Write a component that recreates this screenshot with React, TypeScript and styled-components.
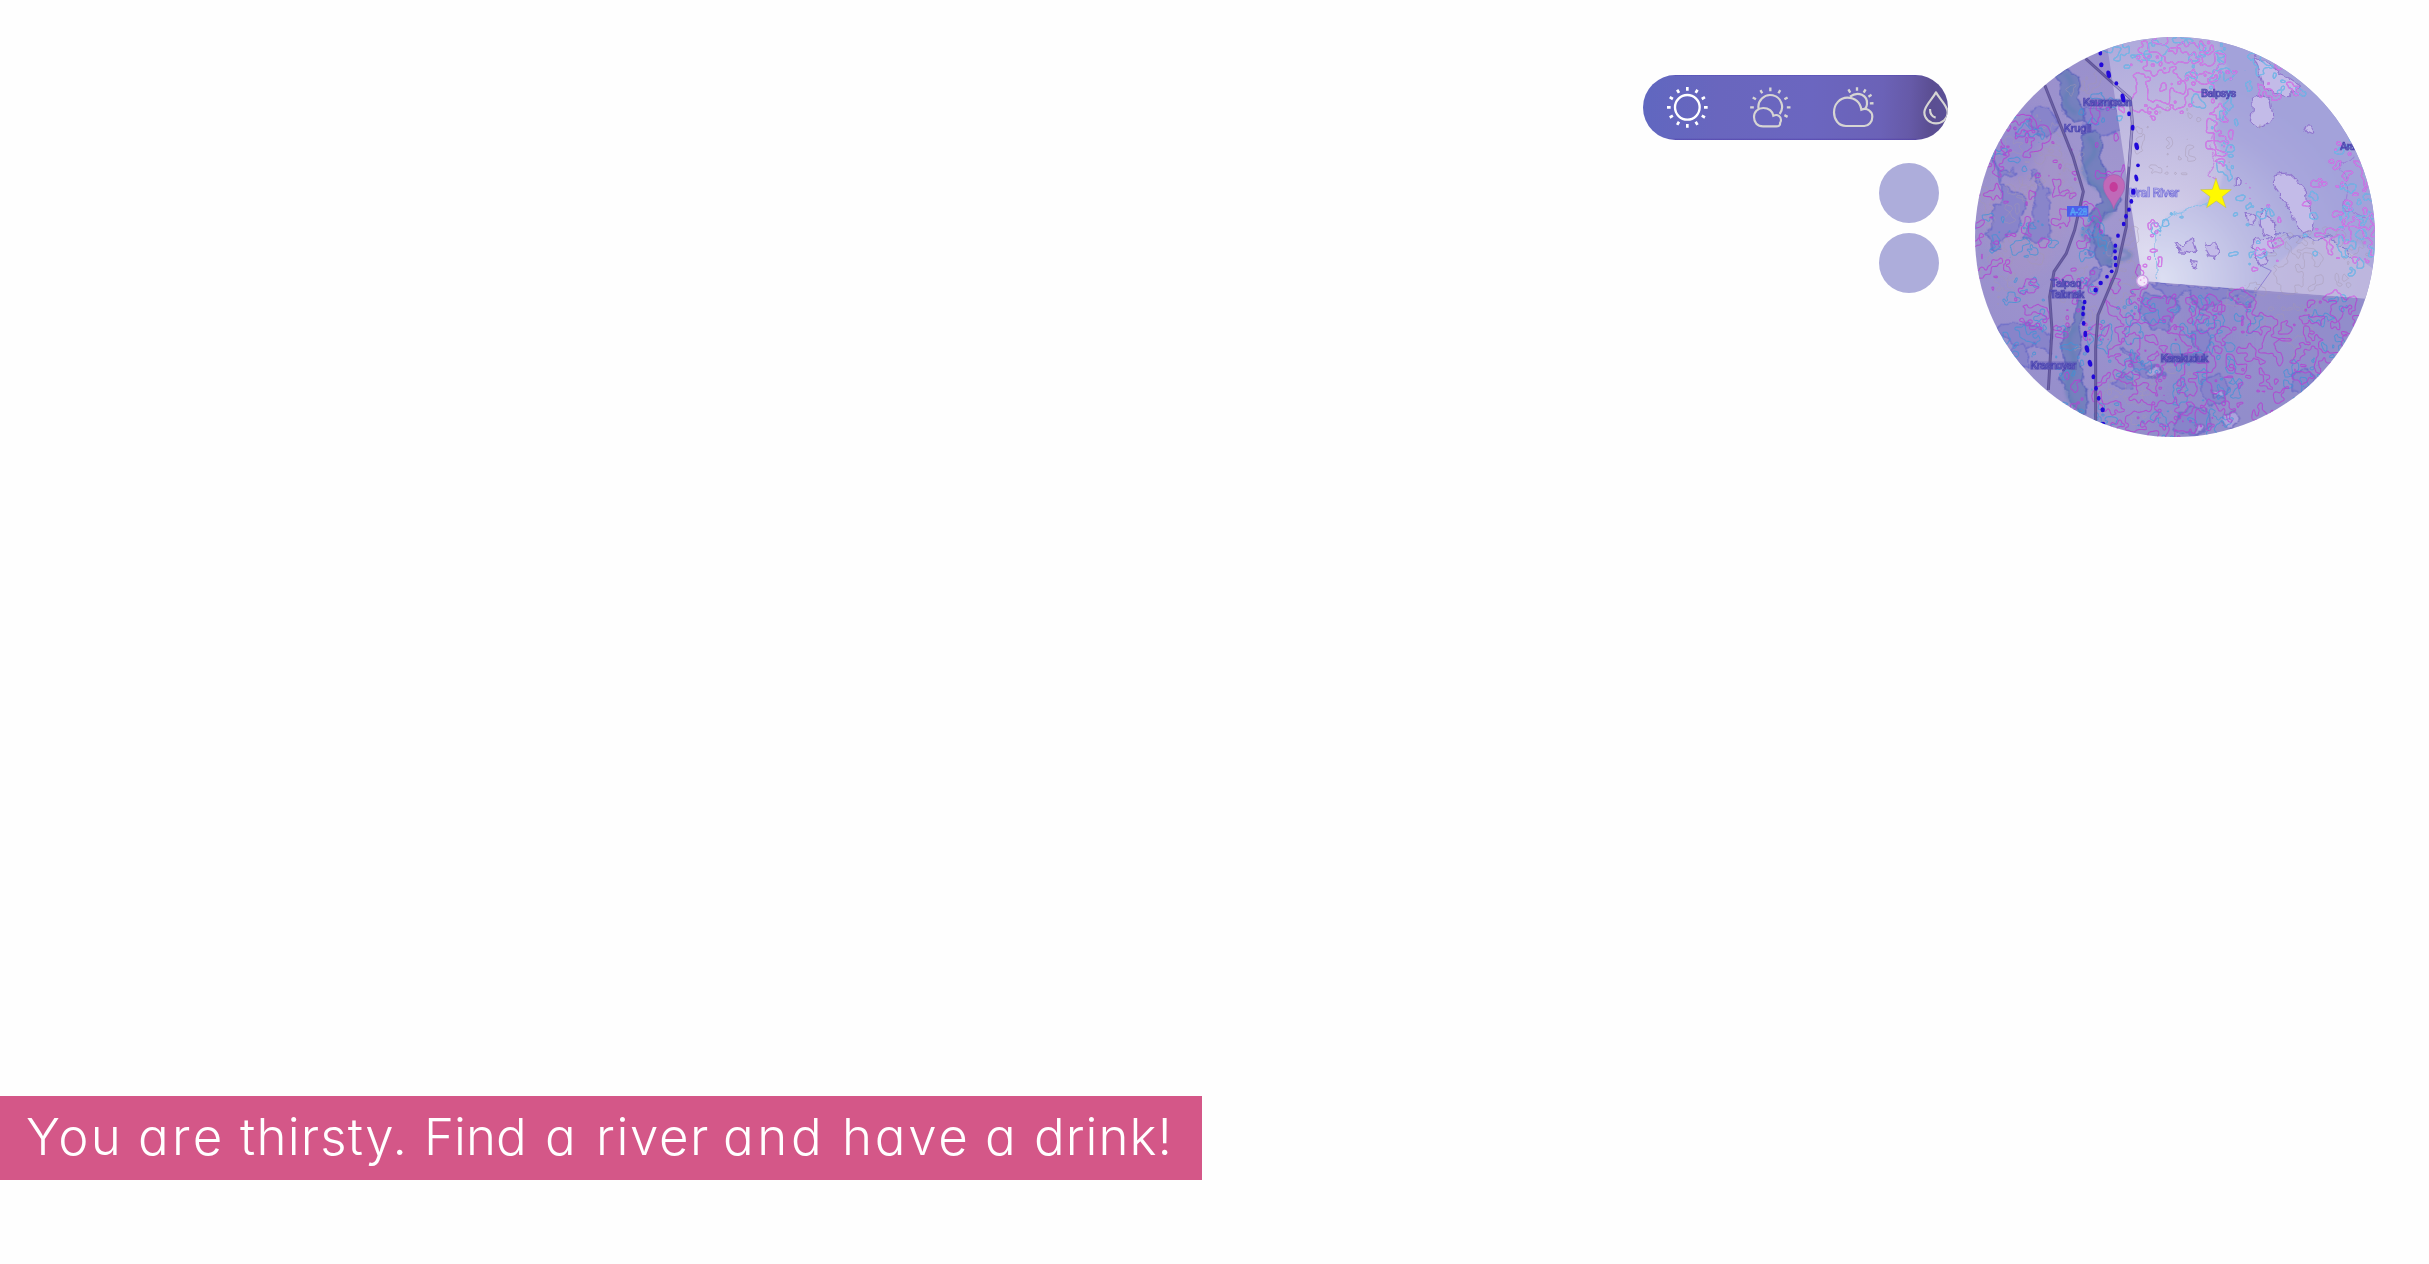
import React, { useMemo } from 'react';
import styled, { createGlobalStyle } from 'styled-components';

const Global = createGlobalStyle`
  * { box-sizing: border-box; }
  html, body { margin: 0; padding: 0; background: #fefefe; overflow: hidden; }
`;

const Screen = styled.main`
  display: flex;
  flex-direction: column;
  justify-content: space-between;
  align-items: flex-start;
  width: 2429px;
  height: 1264px;
  padding: 37px 0 84px;
  background: #fefefe;
  font-family: Inter, 'Liberation Sans', sans-serif;
`;

const Hud = styled.header`
  display: flex;
  align-self: flex-end;
  align-items: flex-start;
  gap: 27px;
  padding-right: 54px;
`;

const Controls = styled.div`
  display: flex;
  flex-direction: column;
  align-items: flex-end;
  padding-top: 38px;
`;

const WeatherBar = styled.div`
  display: flex;
  align-items: flex-start;
  gap: 42px;
  width: 305px;
  height: 65px;
  padding: 12px 0 0 24px;
  overflow: hidden;
  border-radius: 33px;
  background:
    linear-gradient(to bottom, rgba(70, 60, 175, 0.5) 0, transparent 1.5px, transparent 63px, rgba(75, 55, 165, 0.6) 65px),
    linear-gradient(93deg, #6067c0 0%, #6966be 25%, #6b66c0 55%, #6b62b7 78%, #665aa8 87%, #5b4e92 94%, #5b5096 100%);
`;

const WeatherIcon = styled.svg<{ $active?: boolean }>`
  flex: none;
  width: 41px;
  height: 41px;
  overflow: visible;
  fill: none;
  stroke: ${(p) => (p.$active ? '#ffffff' : '#d6d5d3')};
  stroke-width: ${(p) => (p.$active ? 7 : 6.5)};
`;

const Slots = styled.div`
  display: flex;
  flex-direction: column;
  gap: 10px;
  padding: 23px 9px 0 0;
`;

const Slot = styled.div`
  width: 60px;
  height: 60px;
  border-radius: 50%;
  background: #adaddb;
`;

const MiniMap = styled.svg`
  display: block;
  width: 400px;
  height: 400px;
`;

const MapLabel = styled.text`
  font-family: Roboto, 'Liberation Sans', sans-serif;
  font-size: 34px;
  font-weight: 500;
  fill: #6f68bf;
  stroke: #4a44b0;
  stroke-width: 2px;
`;

const Banner = styled.div`
  display: flex;
  width: 1202px;
  height: 84px;
  padding-left: 26px;
  background: #d45788;
  color: #ffffff;
  font-size: 51px;
  font-weight: 300;
  line-height: 82px;
  white-space: pre;
  font-feature-settings: 'cv11' 1, 'calt' 0;
`;

const Word = styled.span<{ $advance: number; $tracking: number }>`
  flex: none;
  width: ${(p) => p.$advance}px;
  letter-spacing: ${(p) => p.$tracking}px;
`;

const message: [string, number, number][] = [
  ['You ', 112, 2.2],
  ['are ', 102, 3.3],
  ['thirsty. ', 184, 1.2],
  ['Find ', 121, 0],
  ['a ', 51, 0],
  ['river ', 127, 1.6],
  ['and ', 119, 3.6],
  ['have ', 143, 2.7],
  ['a ', 49, 0],
  ['drink!', 140, 1],
];

type Point = [number, number];
const rays = (cx: number, cy: number, pts: Point[]) =>
  pts
    .map(([x, y]) => {
      const d = Math.hypot(x - cx, y - cy);
      const ux = ((x - cx) / d) * 5.5;
      const uy = ((y - cy) / d) * 5.5;
      return `M${x - ux} ${y - uy}L${x + ux} ${y + uy}`;
    })
    .join('');

const sunRays = Array.from({ length: 12 }, (_, i): Point => {
  const a = (i * Math.PI) / 6;
  return [172 + Math.cos(a) * 55.5, 142 + Math.sin(a) * 55.5];
});

/* Deterministic value noise, used for the shoreline and vegetation contours. */
const hash = (x: number, y: number, s: number) => {
  let h = (x * 374761393 + y * 668265263 + s * 1442695041) | 0;
  h = Math.imul(h ^ (h >>> 13), 1274126177);
  h ^= h >>> 16;
  return (h >>> 0) / 4294967295;
};
const noise = (x: number, y: number, s: number) => {
  const ix = Math.floor(x);
  const iy = Math.floor(y);
  const fx = x - ix;
  const fy = y - iy;
  const u = fx * fx * (3 - 2 * fx);
  const v = fy * fy * (3 - 2 * fy);
  const a = hash(ix, iy, s);
  const b = hash(ix + 1, iy, s);
  const c = hash(ix, iy + 1, s);
  const d = hash(ix + 1, iy + 1, s);
  return a + (b - a) * u + (c - a) * v + (a - b - c + d) * u * v;
};

type Zone = [number, number, number, number, number?];
const contour = (zones: Zone[], seed: number, size: number, level: number) => {
  const step = 3;
  const n = 401;
  const f = new Float32Array(n * n);
  for (let j = 0; j < n; j++)
    for (let i = 0; i < n; i++) {
      const x = 46 + i * step;
      const y = 52 + j * step;
      let m = 0;
      for (const [cx, cy, rx, ry, w = 1] of zones) {
        const q = ((x - cx) / rx) ** 2 + ((y - cy) / ry) ** 2;
        if (q < 1.9) m = Math.max(m, (0.25 + w * 0.75) * Math.min(1, (1.9 - q) * 1.4));
      }
      const v = noise(x / size, y / size, seed) * 0.6 + noise((x / size) * 2.6, (y / size) * 2.6, seed + 9) * 0.4;
      f[j * n + i] = v - level - (1 - m) * 0.4;
    }
  let d = '';
  const r = (v: number) => Math.round(v * 10) / 10;
  for (let j = 0; j < n - 1; j++)
    for (let i = 0; i < n - 1; i++) {
      const a = f[j * n + i];
      const b = f[j * n + i + 1];
      const c = f[(j + 1) * n + i + 1];
      const e = f[(j + 1) * n + i];
      const x = 46 + i * step;
      const y = 52 + j * step;
      const p: Point[] = [];
      if (a > 0 !== b > 0) p.push([x + (step * a) / (a - b), y]);
      if (b > 0 !== c > 0) p.push([x + step, y + (step * b) / (b - c)]);
      if (e > 0 !== c > 0) p.push([x + (step * e) / (e - c), y + step]);
      if (a > 0 !== e > 0) p.push([x, y + (step * a) / (a - e)]);
      for (let k = 0; k + 1 < p.length; k += 2)
        d += `M${r(p[k][0])} ${r(p[k][1])}L${r(p[k + 1][0])} ${r(p[k + 1][1])}`;
    }
  return d;
};

const magentaZones: Zone[] = [
  [650, 150, 110, 95], [770, 145, 60, 40], [600, 250, 70, 45, 0.85], [780, 350, 35, 110, 0.75],
  [180, 350, 75, 55], [100, 400, 60, 60, 0.7], [300, 480, 45, 120, 0.6], [430, 290, 60, 40, 0.8], [450, 420, 40, 90, 0.6],
  [570, 700, 35, 90, 0.8], [960, 190, 60, 50, 0.5], [1180, 440, 55, 80, 0.7],
  [1180, 650, 70, 90, 0.8], [900, 640, 60, 90, 0.4], [1080, 570, 50, 80, 0.4],
  [520, 930, 110, 90, 0.95], [680, 900, 100, 80, 0.95], [840, 960, 100, 120], [950, 1000, 90, 80, 0.8],
  [1130, 900, 90, 70, 0.95], [1090, 1020, 80, 100, 0.95], [880, 1120, 110, 70, 0.75], [700, 1100, 110, 130],
  [500, 1130, 80, 90, 0.95], [340, 900, 55, 60, 0.8], [220, 830, 50, 80, 0.7], [100, 690, 60, 90, 0.75],
  [310, 1110, 50, 60, 0.7], [140, 560, 90, 60, 0.55], [380, 620, 40, 60, 0.8], [340, 780, 60, 40, 0.6],
  [650, 1210, 170, 40, 0.9], [1000, 1100, 60, 60, 0.8], [450, 830, 90, 50, 0.6], [240, 560, 60, 100, 0.5],
];
const cyanZones: Zone[] = [
  [630, 90, 170, 30, 0.85], [490, 110, 50, 50, 0.8], [750, 190, 60, 70, 0.7], [795, 360, 35, 120, 0.8],
  [900, 160, 40, 70, 0.8], [1000, 200, 40, 30, 0.8], [170, 370, 80, 70, 0.75], [430, 270, 60, 40, 0.75],
  [620, 600, 50, 50, 0.5], [830, 740, 35, 40, 0.5], [880, 620, 55, 90, 0.55], [1070, 600, 40, 90, 0.5],
  [1190, 620, 50, 150, 0.8], [1170, 380, 40, 50, 0.7], [210, 670, 70, 60, 0.8], [90, 640, 50, 50, 0.8],
  [190, 890, 60, 110, 0.7], [400, 700, 35, 100, 0.7], [340, 1000, 50, 170, 0.5], [530, 960, 90, 110, 0.75],
  [720, 940, 90, 90, 0.8], [740, 1090, 90, 90, 0.9], [850, 880, 50, 60, 0.7], [1110, 870, 60, 50, 0.75],
  [1030, 1080, 50, 60, 0.8], [480, 1200, 70, 50, 0.8], [690, 1200, 110, 60, 0.85], [1140, 960, 50, 50, 0.6],
];
const tanZones: Zone[] = [
  [640, 370, 110, 90, 0.4], [1070, 720, 140, 80, 0.85], [930, 850, 120, 60, 0.8], [400, 870, 80, 120, 0.6],
  [120, 480, 70, 120, 0.65], [270, 420, 100, 120, 0.6], [350, 160, 70, 60, 0.65], [150, 760, 90, 100, 0.7],
  [490, 720, 40, 140, 0.75], [1010, 920, 40, 80, 0.8], [490, 1150, 80, 60, 0.7], [600, 1100, 90, 90, 0.5],
];

const dots: [number, number, number, number][] = [
  [422, 99, 5, 7], [425, 134, 6, 7], [447, 163, 6, 11], [470, 190, 5, 6], [490, 234, 6, 13], [508, 281, 5, 7],
  [519, 323, 5, 8], [531, 379, 6, 11], [535, 436, 5, 5], [530, 474, 5, 10], [521, 515, 6, 9], [515, 544, 5, 7],
  [508, 569, 5, 6], [499, 589, 5, 7], [492, 612, 5, 6], [475, 647, 5, 6], [467, 677, 5, 6], [466, 694, 5, 6],
  [467, 714, 5, 6], [468, 735, 5, 6], [456, 754, 5, 5], [442, 770, 5, 5], [423, 789, 6, 6], [408, 810, 6, 7],
  [375, 846, 5, 6], [371, 864, 5, 6], [370, 882, 5, 6], [372, 910, 5, 7], [377, 942, 5, 9], [382, 987, 6, 11],
  [391, 1030, 6, 10], [401, 1070, 5, 7], [409, 1105, 5, 7], [417, 1135, 5, 7], [429, 1169, 6, 7], [430, 1211, 6, 5],
];

const riverShapes = [
  'M288 170 L318 147 L355 172 L362 200 L350 232 L368 262 L372 300 L350 305 L318 285 L302 255 L308 222 L300 188Z',
  'M372 345 L410 330 L425 350 L422 395 L430 440 L450 480 L470 520 L485 545 L472 568 L440 575 L428 590 L425 640 L455 655 L462 700 L452 735 L425 738 L410 710 L402 665 L402 610 L388 580 L427 545 L420 520 L395 490 L376 450 L364 410Z',
  'M352 840 L370 850 L372 885 L355 925 L365 985 L350 1020 L372 1052 L365 1085 L380 1110 L385 1180 L370 1185 L330 1140 L300 1075 L318 1030 L305 970 L318 925 L345 900Z',
];

const lakes = [
  'M215 270 L245 262 L280 278 L298 320 L265 350 L235 350 L212 310Z',
  'M124 492 L150 505 L175 520 L198 537 L197 560 L180 600 L178 630 L150 640 L128 655 L124 690 L100 690 L96 660 L74 640 L96 622 L98 600 L110 560 L122 550Z',
  'M212 450 L230 442 L243 460 L244 500 L268 505 L270 560 L272 655 L255 650 L225 670 L192 650 L200 630 L222 610 L220 560 L230 520 L228 462 L215 475Z',
  'M372 270 L470 265 L498 300 L485 330 L430 350 L372 325Z',
  'M95 415 L120 450 L145 455 L166 442 L168 466 L132 468 L124 495 L118 460Z',
  'M110 920 L175 905 L215 915 L275 950 L272 1000 L225 970 L190 990 L160 975Z',
  'M190 970 L205 1000 L205 1050 L165 1020 L155 985Z',
  'M560 822 L660 838 L655 868 L618 930 L575 922 L538 870Z',
  'M456 1090 L488 1062 L522 1078 L520 1100 L480 1104Z',
  'M485 985 L530 1000 L550 1040 L590 1040 L616 1060 L560 1078 L530 1050Z',
  'M660 1180 L700 1160 L750 1175 L758 1215 L720 1240 L640 1235Z',
  'M1000 1060 L1040 1045 L1065 1080 L1040 1120 L1000 1115Z',
  'M720 1080 L780 1060 L810 1100 L790 1150 L750 1160 L730 1120Z',
  'M700 930 L740 925 L760 960 L740 990 L700 975Z',
  'M385 620 L402 600 L415 660 L400 710 L385 690Z',
  'M380 790 L395 745 L425 745 L420 770 L385 800Z',
];
const southShore = 'M570 790 L895 814 L872 860 L828 850 L835 825 L790 840 L735 870 L700 850 L690 812 L640 840Z';

const islands = [
  'M875 235 L905 225 L935 240 L942 285 L925 310 L895 325 L872 305 L878 270Z',
  'M880 105 L1020 195 L985 230 L945 222 L915 205 L905 165Z',
  'M940 465 L985 458 L1010 480 L1040 515 L1045 560 L1065 600 L1058 635 L1030 645 L1005 610 L990 570 L965 530 L942 500Z',
  'M862 580 L885 590 L888 615 L868 612Z',
  'M905 565 L918 570 L922 595 L945 605 L945 660 L915 645 L905 610Z',
  'M878 655 L930 660 L940 690 L912 700 L925 725 L905 740 L885 710Z',
  'M738 672 L765 668 L776 692 L765 712 L745 710 L734 690Z',
  'M696 722 L712 724 L708 745 L692 740Z',
  'M1032 320 L1060 322 L1062 335 L1045 345Z',
  'M830 480 L845 482 L842 496 L830 494Z',
  'M650 665 L668 672 L700 655 L710 690 L690 700 L660 695Z',
];
const southIslands = [
  'M560 1050 L602 1040 L606 1058 L575 1070Z',
  'M790 1185 L825 1175 L840 1200 L820 1220 L790 1210Z',
  'M700 1215 L718 1212 L728 1230 L715 1238Z',
  'M755 1110 L790 1118 L795 1130 L765 1128Z',
];

const roads = [
  'M255 195 L340 410 L371 515 L345 630 L320 700 L283 755 L270 830 L277 930 L266 1110',
  'M378 116 L452 183 L512 235 L518 310 L500 545 L500 620 L470 755 L415 885 L408 980 L408 1202',
];

function Map() {
  const lines = useMemo(
    () => ({
      magenta: contour(magentaZones, 3, 29, 0.535),
      cyan: contour(cyanZones, 17, 28, 0.55),
      tan: contour(tanZones, 31, 30, 0.54),
    }),
    [],
  );
  return (
    <MiniMap viewBox="46 51 1200 1200">
      <defs>
        <clipPath id="lens"><circle cx="646" cy="651" r="600" /></clipPath>
        <clipPath id="view"><path d="M548 783 L437 40 L1300 0 L1300 842Z" /></clipPath>
        <radialGradient id="shade" gradientUnits="userSpaceOnUse" cx="420" cy="560" r="760">
          <stop offset="0" stopColor="#a298cf" />
          <stop offset="0.5" stopColor="#9b91cd" />
          <stop offset="1" stopColor="#928dcb" />
        </radialGradient>
        <radialGradient id="beam" gradientUnits="userSpaceOnUse" cx="560" cy="700" r="760">
          <stop offset="0" stopColor="#dedcf0" />
          <stop offset="0.3" stopColor="#cbc5e5" />
          <stop offset="0.6" stopColor="#bbb5df" />
          <stop offset="1" stopColor="#a7a3da" />
        </radialGradient>
        <radialGradient id="water" gradientUnits="userSpaceOnUse" cx="600" cy="780" r="620">
          <stop offset="0" stopColor="#dde0f3" />
          <stop offset="0.45" stopColor="#bcbce3" />
          <stop offset="0.8" stopColor="#a8a6dc" />
          <stop offset="1" stopColor="#a3a2da" />
        </radialGradient>
        <filter id="soft" x="-20%" y="-20%" width="140%" height="140%"><feGaussianBlur stdDeviation="4" /></filter>
        <filter id="haze" x="-30%" y="-30%" width="160%" height="160%"><feGaussianBlur stdDeviation="18" /></filter>
        <filter id="coast" filterUnits="userSpaceOnUse" x="40" y="40" width="1220" height="1220">
          <feTurbulence type="fractalNoise" baseFrequency="0.035" numOctaves="2" seed="4" />
          <feDisplacementMap in="SourceGraphic" scale="28" xChannelSelector="R" yChannelSelector="G" />
        </filter>
        <filter id="bank" filterUnits="userSpaceOnUse" x="40" y="40" width="1220" height="1220">
          <feTurbulence type="fractalNoise" baseFrequency="0.03" numOctaves="2" seed="8" />
          <feDisplacementMap in="SourceGraphic" scale="24" xChannelSelector="R" yChannelSelector="G" />
        </filter>
      </defs>
      <g clipPath="url(#lens)">
        <rect x="40" y="45" width="1215" height="1215" fill="url(#shade)" />
        <g filter="url(#haze)">
          <path d="M220 300 L330 420 L340 600 L260 740 L180 800 L100 700 L60 560 L150 480Z" fill="#a894c6" opacity="0.45" />
          <path d="M650 800 L840 820 L850 1000 L690 1240 L560 1230 L640 1000Z" fill="#8d88ca" opacity="0.6" />
          <path d="M60 420 L200 260 L280 290 L190 480Z" fill="#9188ce" opacity="0.8" />
        </g>
        <g filter="url(#coast)" fill="#8783ca" stroke="#6466c8" strokeWidth="3.5" opacity="0.9">
          {lakes.map((d) => (
            <path key={d} d={d} />
          ))}
          <path d={southShore} />
        </g>
        <g filter="url(#bank)" fill="#7480be" stroke="#5960bc" strokeWidth="3.5">
          {riverShapes.map((d) => (
            <path key={d} d={d} />
          ))}
        </g>
        <g fill="none" stroke="#5f7fb6" strokeWidth="13" opacity="0.6" filter="url(#soft)">
          <path d="M315 160 Q350 190 325 220 T350 280" />
          <path d="M385 350 Q425 390 385 425 T425 510 T410 605 T448 680 T438 725" />
          <path d="M350 920 Q315 950 335 990 T330 1080 T370 1180" />
        </g>
        <path d="M1060 655 L1130 655 L1245 800 L1215 837 L880 818 L930 750 L1000 690Z" fill="#a194ca" opacity="0.4" />
        <g clipPath="url(#view)">
          <rect x="400" y="0" width="900" height="860" fill="url(#beam)" />
          <path
            filter="url(#soft)"
            d="M760 20 L1300 20 L1300 700 L1135 655 L1085 650 L1000 690 L930 750 L890 840 L600 800 L585 640 L625 585 L700 560 L780 500 L800 430 L760 350 L790 260 L755 180 L805 150Z"
            fill="url(#water)"
          />
          <path d="M935 750 L990 700 L1035 655 L1110 655 L1160 690 L1260 760 L1260 850 L870 830Z" fill="#c0b8de" opacity="0.85" />
          <g filter="url(#coast)" fill="none" strokeWidth="3.5">
            <path d="M590 780 L585 640 L625 590 L700 560 L760 545" stroke="#8fc0ea" />
            <path d="M765 340 L750 380 L770 420 L745 460 L770 480" stroke="#c58be2" />
            <path d="M1190 405 L1140 430 L1165 500 L1150 570 L1215 590" stroke="#9c80d8" />
            <path d="M945 640 L1000 650 L1040 655 L1075 658 L1110 650 L1160 690 L1175 720" stroke="#857bd2" />
          </g>
          <path d="M880 840 L890 815 L935 752 L905 738" stroke="#8d80d4" strokeWidth="3" fill="none" />
          <g filter="url(#coast)" fill="#c3bbe8" stroke="#9177cf" strokeWidth="3.5">
            {islands.map((d) => (
              <path key={d} d={d} />
            ))}
          </g>
        </g>
        <g filter="url(#coast)" fill="#aba2dc" stroke="#6f68c0" strokeWidth="3.5">
          {southIslands.map((d) => (
            <path key={d} d={d} />
          ))}
        </g>
        <path d={lines.tan} stroke="#a69ab0" strokeWidth="2.6" opacity="0.55" fill="none" />
        <path d={lines.cyan} stroke="#3b94d8" strokeWidth="3.2" opacity="0.72" fill="none" />
        <path d={lines.magenta} stroke="#b440d2" strokeWidth="3.3" opacity="0.82" fill="none" />
        <g clipPath="url(#view)">
          <path d={lines.cyan} stroke="#7cc2ec" strokeWidth="3.4" opacity="0.75" fill="none" />
          <path d={lines.magenta} stroke="#dc86ee" strokeWidth="3.4" opacity="0.75" fill="none" />
        </g>
        {roads.map((d) => (
          <g key={d} fill="none" strokeLinejoin="round">
            <path d={d} stroke="#584c94" strokeWidth="9" opacity="0.9" />
            <path d={d} stroke="#766ba9" strokeWidth="2" />
          </g>
        ))}
        <path clipPath="url(#view)" d="M452 183 L512 235 L518 310 L508 440" fill="none" stroke="#9c94c8" strokeWidth="6" />
        <g fill="#564fb5" opacity="0.35">
          <rect x="212" y="1024" width="140" height="26" />
          <rect x="602" y="1000" width="142" height="30" />
          <rect x="372" y="236" width="140" height="24" />
          <rect x="272" y="812" width="102" height="24" />
        </g>
        <MapLabel x="369" y="259" textLength="148">Kaumpxon</MapLabel>
        <MapLabel x="312" y="335" textLength="84">Krugli</MapLabel>
        <MapLabel x="724" y="231" textLength="106">Balpsys</MapLabel>
        <MapLabel x="1141" y="391" textLength="46">Ara</MapLabel>
        <MapLabel x="272" y="800" textLength="94">Taipaq</MapLabel>
        <MapLabel x="270" y="835" textLength="104">Taibnak</MapLabel>
        <MapLabel x="212" y="1048" textLength="138">Krasnoyar</MapLabel>
        <MapLabel x="603" y="1025" textLength="143">Karakuduk</MapLabel>
        <MapLabel x="508" y="531" textLength="151" style={{ fill: '#b9b5ea', stroke: '#7771d8', fontSize: 38 }}>Ural River</MapLabel>
        <rect x="322" y="558" width="64" height="32" fill="#4b5deb" />
        <MapLabel x="331" y="584" textLength="52" style={{ fill: '#4b65ef', stroke: '#58a5f4', fontSize: 26 }}>A-28</MapLabel>
        {dots.map(([x, y, rx, ry]) => (
          <ellipse key={`${x}-${y}`} cx={x} cy={y} rx={rx + 0.6} ry={ry + 0.6} fill="#2108da" transform={`rotate(${ry > 9 ? -14 : 0} ${x} ${y})`} />
        ))}
        <path d="M462 567 C456 540 431 524 431 497 A31.5 33 0 0 1 495 497 C495 524 468 540 462 567Z" fill="#c069b8" stroke="#a05db3" strokeWidth="2" />
        <ellipse cx="462" cy="501" rx="12.5" ry="15" fill="#c43c9a" />
        <circle cx="548" cy="783" r="17" fill="#f1e6fa" stroke="#c79de2" strokeWidth="4" />
        <path d="M541 778h4v5h-4zM551 772h4v4h-4zM552 786h4v4h-4z" fill="#e9a5e7" />
        <path d="M769 475 L780 508 L815 509 L788 530 L799 563 L770 543 L741 563 L751 530 L723 509 L758 508Z" fill="#fff900" stroke="#b9b557" strokeWidth="1.5" />
      </g>
    </MiniMap>
  );
}

export default function App() {
  return (
    <>
      <Global />
      <Screen>
        <Hud>
          <Controls>
            <WeatherBar>
              <WeatherIcon $active viewBox="111 81 123 123">
                <circle cx="172" cy="142" r="37" />
                <path strokeWidth="8" d={rays(172, 142, sunRays)} />
              </WeatherIcon>
              <WeatherIcon viewBox="360 81 123 123">
                <path d="M386 148 A35.5 35.5 0 1 1 449 162" />
                <path d="M399 199 C382 199 372 187 372 171 C372 155 384 144 400 144 C416 144 428 154 430 167 C444 161 453 170 453 180 C453 184 452 186 450 189 C452 196 445 199 439 199Z" />
                <path strokeWidth="7" d={rays(421, 142, [[421, 88], [394, 95], [448, 95], [373, 115], [468, 115], [366, 142], [476, 142], [468, 168]])} />
              </WeatherIcon>
              <WeatherIcon viewBox="609 81 123 123">
                <path d="M660 110 C685 91 713 107 711 132 C711 138 708 143 705 147" />
                <path d="M648 198 C625 198 612 178 612 157 C612 132 630 113 652 113 C675 113 691 127 694 149 C712 142 727 154 727 170 C727 186 716 198 703 198Z" />
                <path strokeWidth="7" d={rays(681, 132, [[681, 87], [658, 93], [704, 93], [720, 107], [725, 130]])} />
              </WeatherIcon>
              <WeatherIcon viewBox="858 81 123 123">
                <path strokeLinejoin="round" d="M918 97 C908 117 883 137 883 157 C883 176 899 190 918 190 C937 190 953 176 953 157 C953 137 928 117 918 97Z" />
                <path d="M900 147 C900 162 905 170 917 173" />
              </WeatherIcon>
            </WeatherBar>
            <Slots>
              <Slot />
              <Slot />
            </Slots>
          </Controls>
          <Map />
        </Hud>
        <Banner>
          {message.map(([text, advance, tracking], i) => (
            <Word key={i} $advance={advance} $tracking={tracking}>{text}</Word>
          ))}
        </Banner>
      </Screen>
    </>
  );
}
